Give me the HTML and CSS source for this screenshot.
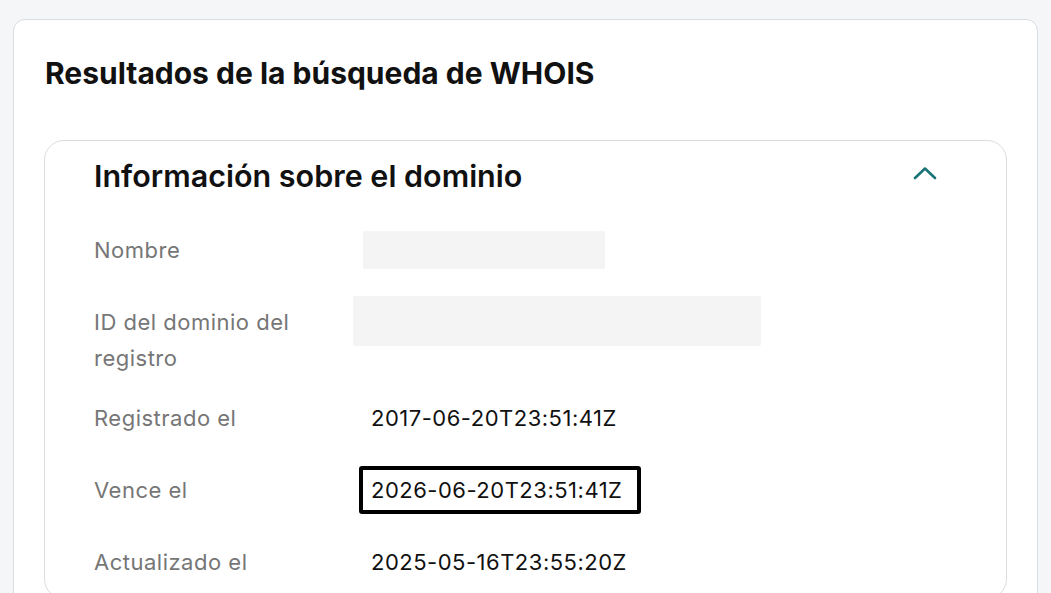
FILE: index.html
```html
<!DOCTYPE html>
<html lang="es">
<head>
  <meta charset="UTF-8">
  <meta name="viewport" content="width=device-width, initial-scale=1.0">
  <link rel="stylesheet" href="styles.css">
</head>
<body>

<div class="results-card">
  <h1 class="results-title">Resultados de la búsqueda de WHOIS</h1>

  <div class="info-panel">
    <div class="panel-header">
      <h2>Información sobre el dominio</h2>
      <svg class="chevron" width="24" height="14" viewBox="0 0 24 14">
        <path d="M2 12 L12 2.5 L22 12" fill="none" stroke="#1b7578" stroke-width="2.6" stroke-linecap="round" stroke-linejoin="round"/>
      </svg>
    </div>

    <div class="info-rows">
      <div class="info-row">
        <div class="label">Nombre</div>
        <div class="value"><span class="redacted short"></span></div>
      </div>
      <div class="info-row tall">
        <div class="label">ID del dominio del registro</div>
        <div class="value"><span class="redacted long"></span></div>
      </div>
      <div class="info-row">
        <div class="label">Registrado el</div>
        <div class="value">2017-06-20T23:51:41Z</div>
      </div>
      <div class="info-row">
        <div class="label">Vence el</div>
        <div class="value"><span class="highlight">2026-06-20T23:51:41Z</span></div>
      </div>
      <div class="info-row">
        <div class="label">Actualizado el</div>
        <div class="value">2025-05-16T23:55:20Z</div>
      </div>
    </div>
  </div>
</div>

</body>
</html>
```

FILE: styles.css
```css
body {
  margin: 0;
  padding: 19px 13px 0;
  background-color: #f5f6f8;
  font-family: Inter, "Noto Sans", sans-serif;
  color: #111;
}

.results-card {
  background-color: #fff;
  border: 1px solid #d8dde2;
  border-radius: 12px;
  padding: 30px 30px 40px;
  min-height: 700px;
}

.results-title {
  margin: 0 0 44px;
  font-size: 30px;
  font-weight: 700;
  line-height: 46px;
  padding-left: 1px;
}

.info-panel {
  border: 1px solid #d8dde2;
  border-radius: 20px;
  padding: 0 49px;
}

.panel-header {
  display: flex;
  align-items: flex-start;
  justify-content: space-between;
  height: 73px;
  padding-right: 20px;
}

.panel-header h2 {
  margin: 0;
  font-size: 30.5px;
  font-weight: 600;
  line-height: 70px;
}

.chevron {
  margin-top: 25px;
}

.info-rows {
  display: flex;
  flex-direction: column;
}

.info-row {
  display: grid;
  grid-template-columns: 277px 1fr;
  padding: 18px 0;
  font-size: 22px;
  line-height: 36px;
  letter-spacing: 0.5px;
}

.info-row.tall {
  padding-bottom: 6px;
}

.label {
  color: #767676;
  max-width: 220px;
}

.value {
  color: #111;
}

.redacted {
  display: block;
  background-color: #f4f4f4;
  border-radius: 2px;
}

.redacted.short {
  width: 242px;
  height: 38px;
  margin: -1px 0 -1px -8px;
}

.redacted.long {
  width: 408px;
  height: 50px;
  margin: -8px 0 -6px -18px;
}

.highlight {
  display: inline-block;
  border: 4px solid #000;
  border-radius: 3px;
  padding: 2px 15px 2px 8px;
  margin: -6px 0 -6px -12px;
}
```
